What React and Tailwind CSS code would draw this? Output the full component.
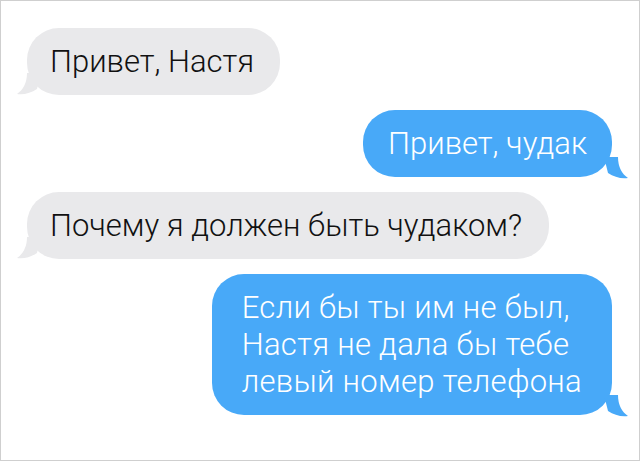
import React from 'react';

const messages = [
  { from: 'them', pad: 'pl-[23px] pr-[26px]', lines: ['Привет, Настя'] },
  { from: 'me', pad: 'pl-[25px] pr-[25px]', lines: ['Привет, чудак'] },
  { from: 'them', pad: 'pl-[23px] pr-[27px]', lines: ['Почему я должен быть чудаком?'] },
  {
    from: 'me',
    pad: 'pl-[30px] pr-[30px] tracking-[0.3px]',
    lines: ['Если бы ты им не был,', 'Настя не дала бы тебе', 'левый номер телефона'],
  },
];

const Tail = ({ side, color }) => (
  <svg
    width="24"
    height="22"
    viewBox="0 0 24 22"
    className={side === 'left' ? 'absolute -left-[10px] bottom-0' : 'absolute -right-[16px] bottom-[-2px] -scale-x-100'}
  >
    <path d="M10 0 C10 10 6 17 0 21 C7 22 14 20 20 16 L24 0 Z" fill={color} />
  </svg>
);

const Bubble = ({ from, pad, lines }) => {
  const mine = from === 'me';
  const tone = mine ? 'bg-[#48a9f8] text-white' : 'bg-[#e9e9eb] text-[#111]';
  return (
    <div className={mine ? 'flex justify-end' : 'flex justify-start'}>
      <div className={`relative rounded-[32px] py-[15px] ${tone} ${pad}`}>
        <Tail side={mine ? 'right' : 'left'} color={mine ? '#48a9f8' : '#e9e9eb'} />
        <div className="relative text-[31px] leading-[37px] font-light">
          {lines.map((l) => (
            <div key={l}>{l}</div>
          ))}
        </div>
      </div>
    </div>
  );
};

export default function App() {
  return (
    <div className="w-[640px] h-[461px] bg-white border border-[#cfcfcf] font-['Roboto',sans-serif]">
      <div className="flex flex-col gap-[15px] pt-[27px] pl-[26px] pr-[27px]">
        {messages.map((m, i) => (
          <Bubble key={i} {...m} />
        ))}
      </div>
    </div>
  );
}
